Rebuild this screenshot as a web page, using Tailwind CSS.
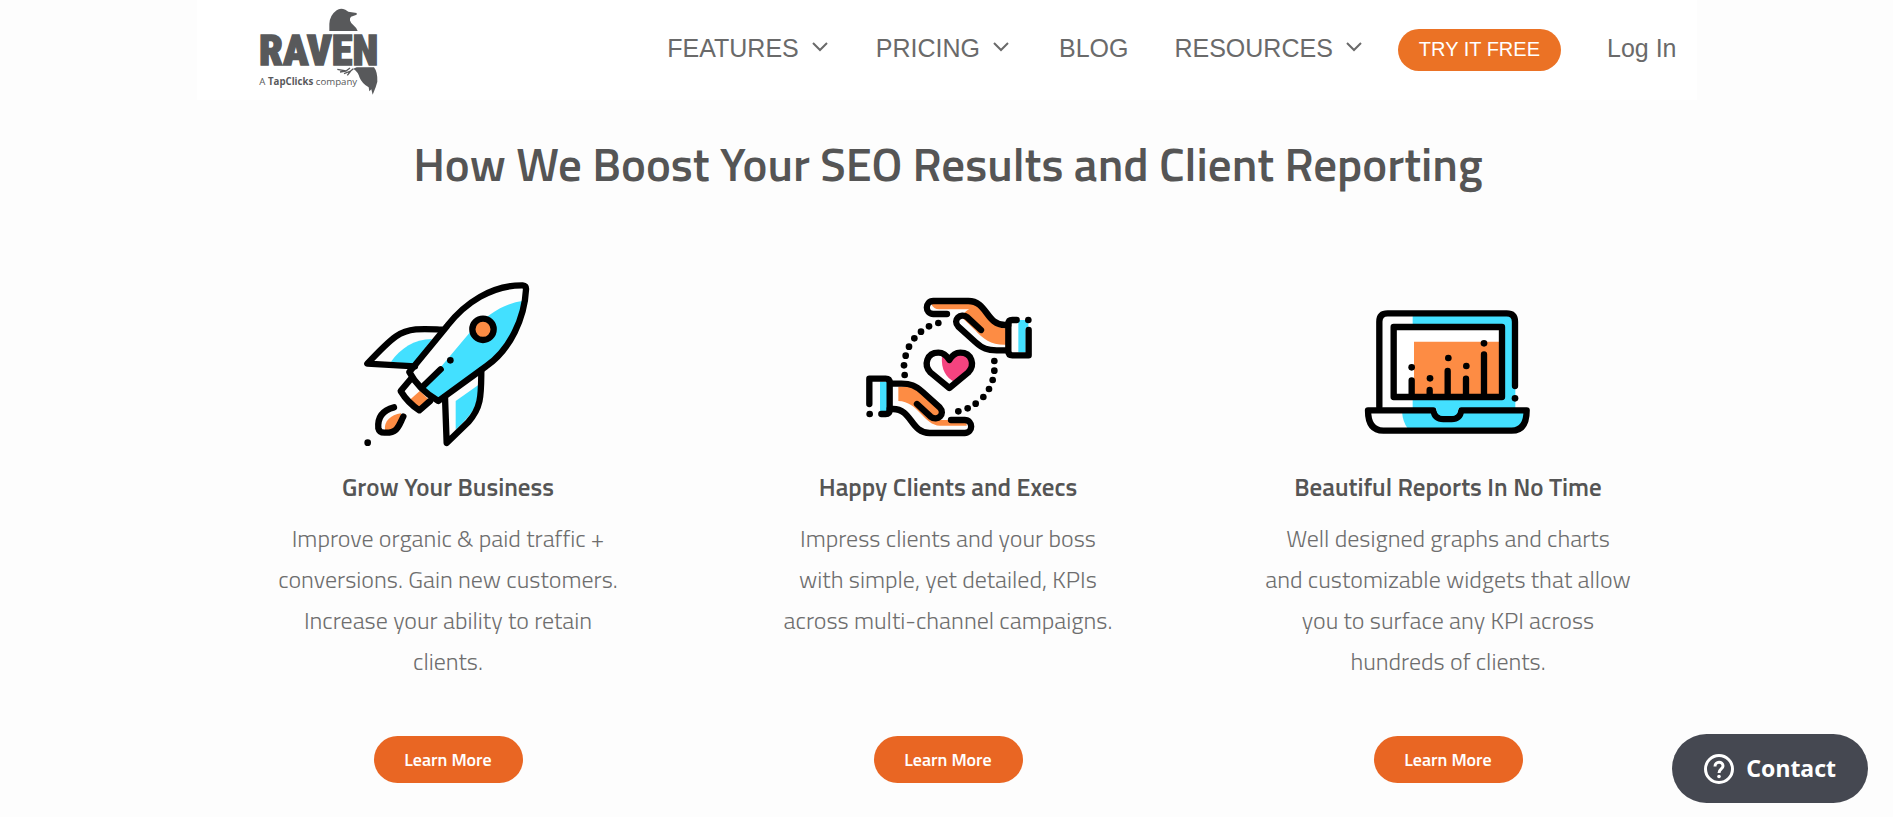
<!DOCTYPE html>
<html lang="en">
<head>
  <meta charset="UTF-8" />
  <meta name="viewport" content="width=device-width, initial-scale=1" />
  <title>Raven Tools</title>
  <script src="https://cdn.jsdelivr.net/npm/@tailwindcss/browser@4"></script>
</head>
<body class="bg-[#fdfdfd] text-[#6e6e6e] font-['Titillium_Web',Roboto,sans-serif]">
  <!-- Header -->
  <header class="max-w-[1500px] mx-auto bg-white h-[100px] flex items-center justify-between pl-[61px] pr-5 font-['Liberation_Sans',sans-serif]">
    <a href="#" aria-label="Raven">
      <svg class="w-[124px] h-[90px]" viewBox="54 15 372 270" fill="#58595b">
        <path d="M268 93V72Q269 46 290 31Q300 23 316 29L325 35L350 39V44L333 50Q324 60 339 74Q350 83 353 93Z" />
        <path d="M350 202H402Q413 216 412 245L407 262L398 284L394 268L388 274L386 262Q366 250 359 233Q354 215 340 206Z" />
        <path d="M292 208L318 213L330 204M300 216L318 213M312 221L332 213L340 206M322 226L332 213" fill="none" stroke="#58595b" stroke-width="4" />
        <text x="57" y="195" font-family="'Roboto Condensed','Liberation Sans Narrow','Open Sans Condensed',Roboto" font-weight="900" font-size="127" stroke="#58595b" stroke-width="4">RAVEN</text>
        <text x="58" y="256" font-family="'Open Sans'" font-size="29">A <tspan font-weight="700">TapClicks</tspan> company</text>
      </svg>
    </a>
    <nav class="flex items-center text-[25px] leading-8 text-[#6a6a6a] pb-1">
      <a href="#" class="flex items-center gap-[13px] mr-12">FEATURES
        <svg class="w-4 h-4" viewBox="0 0 16 16" fill="none" stroke="currentColor" stroke-width="2"><path d="M1 3L8 10L15 3" /></svg>
      </a>
      <a href="#" class="flex items-center gap-[13px] mr-[50px]">PRICING
        <svg class="w-4 h-4" viewBox="0 0 16 16" fill="none" stroke="currentColor" stroke-width="2"><path d="M1 3L8 10L15 3" /></svg>
      </a>
      <a href="#" class="mr-[46px]">BLOG</a>
      <a href="#" class="flex items-center gap-[13px] mr-9">RESOURCES
        <svg class="w-4 h-4" viewBox="0 0 16 16" fill="none" stroke="currentColor" stroke-width="2"><path d="M1 3L8 10L15 3" /></svg>
      </a>
      <a href="#" class="h-[42px] px-[21px] mr-[46px] mt-1 pb-[2px] flex items-center rounded-full bg-[#eb7225] text-white text-[20px]">TRY IT FREE</a>
      <a href="#">Log In</a>
    </nav>
  </header>

  <main class="max-w-[1503px] mx-auto pl-[3px] text-center">
    <h1 class="pt-8 text-[47px] leading-[64px] font-semibold text-[#555]">How We Boost Your SEO Results and Client Reporting</h1>

    <section class="grid grid-cols-3 pt-[85px]">
      <!-- Grow -->
      <article class="flex flex-col items-center">
        <svg class="w-[166px] h-[166px]" viewBox="45 32 498 498" overflow="visible" fill="none" stroke="#000" stroke-width="19" stroke-linecap="round" stroke-linejoin="round">
          <g stroke="none">
            <path fill="#43e0ff" d="M520 92C465 98 415 128 360 186L222 350L262 388L400 286C470 240 515 170 520 92Z" />
            <path fill="#43e0ff" d="M123 274C150 236 192 206 246 206L190 282Z" />
            <path fill="#43e0ff" d="M385 344L317 392V478C368 430 387 405 385 344Z" />
            <path fill="#fd8c44" d="M210 361L179 389L208 415L236 388Z" />
            <path fill="#fd8c44" d="M153 429C122 434 101 452 105 480C140 482 158 455 153 429Z" />
          </g>
          <path d="M178 305L292 166C345 98 425 44 518 45Q529 46 528 58C524 140 482 238 408 288L265 392Q205 357 178 305Z" />
          <path d="M275 178C228 176 180 170 138 198Q112 216 52 280L195 288" />
          <path d="M394 300C393 370 396 410 355 455L290 518L285 380" />
          <circle cx="399" cy="177" r="32" fill="#fd8c44" />
          <path d="M272 297L217 350" />
          <path d="M183 325L152 362Q173 397 208 420L240 392" />
          <path d="M132 411C98 420 82 442 85 474Q88 488 106 487C144 488 146 466 160 439" />
          <g fill="#000" stroke="none"><circle cx="301" cy="270" r="10" /><circle cx="53" cy="517" r="10" /></g>
        </svg>
        <h2 class="mt-6 text-[25px] leading-8 font-semibold text-[#555]">Grow Your Business</h2>
        <p class="mt-[15px] h-[164px] text-[24px] leading-[41px] font-light">Improve organic &amp; paid traffic +<br />conversions. Gain new customers.<br />Increase your ability to retain<br />clients.</p>
        <button class="mt-[54px] w-[149px] h-[47px] rounded-full bg-[#e96623] text-white text-[18px] font-semibold">Learn More</button>
      </article>

      <!-- Happy clients -->
      <article class="flex flex-col items-center">
        <svg class="w-[166px] h-[166px]" viewBox="45 33 498 498" overflow="visible" fill="none" stroke="#000" stroke-width="19" stroke-linecap="round" stroke-linejoin="round">
          <g stroke="none">
            <path fill="#fd8c44" d="M242 98H355C405 98 410 175 470 175V224C425 226 400 208 375 180L335 142Q345 122 358 118H268Q250 118 242 98Z" />
            <path fill="#fd8c44" d="M145 350H180C220 352 240 385 278 418L265 450H350V467H270C222 467 205 394 145 393Z" />
            <path fill="#43e0ff" d="M505 150H535V173H527V247H505Z" />
            <path fill="#43e0ff" d="M90 335H112V426H90Z" />
            <path fill="#f5437f" d="M276 257C272 300 290 322 312 335L356 302C370 285 362 250 331 252Q312 252 298 270Z" />
          </g>
          <g id="hand">
            <path d="M291 132H250C224 132 224 93 250 93H355C412 93 408 165 465 165H475" />
            <path d="M393 180L352 142C332 126 306 150 325 170L376 216C398 236 412 241 440 241H470" />
            <path d="M500 150H487Q475 150 475 162V244Q475 256 487 256H536V180" />
            <circle cx="535" cy="150" r="10" fill="#000" stroke="none" />
          </g>
          <use href="#hand" transform="rotate(180 297 291)" />
          <path d="M298 354L242 308C219 285 231 248 265 248Q285 248 298 270Q311 248 331 248C365 248 377 285 354 308Z" />
          <g fill="#000" stroke="none">
            <circle cx="265" cy="159" r="10" /><circle cx="237" cy="169" r="10" /><circle cx="213" cy="185" r="10" /><circle cx="193" cy="205" r="10" />
            <circle cx="177" cy="230" r="10" /><circle cx="167" cy="257" r="10" /><circle cx="162" cy="286" r="10" /><circle cx="164" cy="315" r="10" />
            <circle cx="433" cy="273" r="10" /><circle cx="433" cy="302" r="10" /><circle cx="428" cy="330" r="10" /><circle cx="417" cy="357" r="10" />
            <circle cx="400" cy="381" r="10" /><circle cx="377" cy="401" r="10" /><circle cx="353" cy="415" r="10" /><circle cx="325" cy="424" r="10" />
          </g>
        </svg>
        <h2 class="mt-6 text-[25px] leading-8 font-semibold text-[#555]">Happy Clients and Execs</h2>
        <p class="mt-[15px] h-[164px] text-[24px] leading-[41px] font-light">Impress clients and your boss<br />with simple, yet detailed, KPIs<br />across multi-channel campaigns.</p>
        <button class="mt-[54px] w-[149px] h-[47px] rounded-full bg-[#e96623] text-white text-[18px] font-semibold">Learn More</button>
      </article>

      <!-- Reports -->
      <article class="flex flex-col items-center">
        <svg class="w-[166px] h-[166px]" viewBox="45 -27 498 498" overflow="visible" fill="none" stroke="#000" stroke-width="19" stroke-linecap="round" stroke-linejoin="round">
          <g stroke="none">
            <path fill="#43e0ff" d="M188 75H490V290H496V355H188Z" />
            <path fill="#43e0ff" d="M156 365H525Q525 415 485 417H174Q158 395 156 365Z" />
            <path fill="#fff" d="M131 111H456V321H131Z" />
            <path fill="#fd8c44" d="M192 155H450V315H192Z" />
          </g>
          <path d="M88 350V95Q88 70 113 70H470Q495 70 495 95V288" />
          <path d="M131 111H456V321H131Z" />
          <path d="M185 315V271M239 315V300M293 315V243M348 315V266M402 315V193" />
          <path d="M54 361H250Q254 387 280 387H305Q330 387 334 361H530Q530 422 485 422H100Q54 422 54 361Z" />
          <path fill="#43e0ff" stroke="none" d="M259 345H325V360Q322 378 305 378H280Q262 378 259 360Z" />
          <g fill="#000" stroke="none">
            <circle cx="185" cy="232" r="10" /><circle cx="240" cy="265" r="10" /><circle cx="295" cy="204" r="10" />
            <circle cx="349" cy="228" r="10" /><circle cx="402" cy="160" r="10" /><circle cx="495" cy="325" r="10" />
          </g>
        </svg>
        <h2 class="mt-6 text-[25px] leading-8 font-semibold text-[#555]">Beautiful Reports In No Time</h2>
        <p class="mt-[15px] h-[164px] text-[24px] leading-[41px] font-light">Well designed graphs and charts<br />and customizable widgets that allow<br />you to surface any KPI across<br />hundreds of clients.</p>
        <button class="mt-[54px] w-[149px] h-[47px] rounded-full bg-[#e96623] text-white text-[18px] font-semibold">Learn More</button>
      </article>
    </section>
  </main>

  <!-- Contact widget -->
  <button class="fixed right-[25px] bottom-[14px] h-[69px] px-8 flex items-center gap-3 rounded-full bg-[#454851] text-white text-[23px] font-bold font-['Noto_Sans',sans-serif]">
    <svg class="w-[30px] h-[30px]" viewBox="0 0 30 30" fill="none" stroke="#fff" stroke-width="3">
      <circle cx="15" cy="15" r="13.5" />
      <path d="M11 12.5C11 7 19 7 19 12C19 15 15 15 15 19" />
      <circle cx="15" cy="22.5" r="1.8" fill="#fff" stroke="none" />
    </svg>
    Contact
  </button>
</body>
</html>
